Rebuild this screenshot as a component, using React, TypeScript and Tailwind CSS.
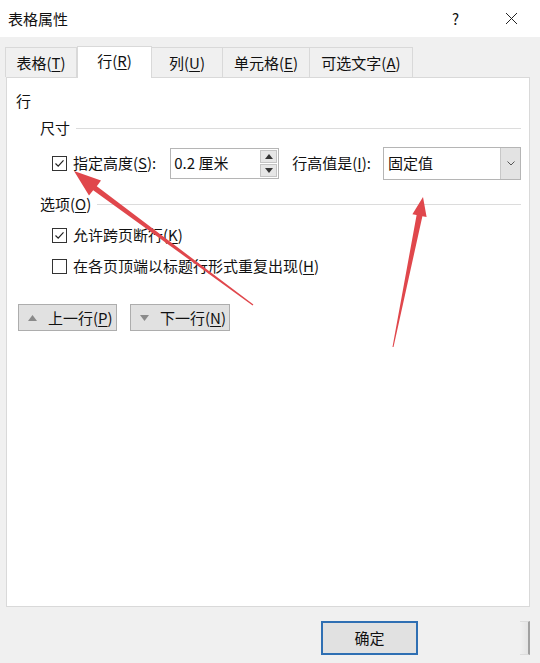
import React from "react";

const font = { fontFamily: '"Noto Sans CJK SC", "Noto Sans", sans-serif' };

function Check({ checked }: { checked: boolean }) {
  return (
    <div className="w-[15px] h-[15px] border border-[#333333] bg-white flex items-center justify-center shrink-0">
      {checked && (
        <svg width="11" height="11" viewBox="0 0 11 11">
          <path d="M1.5 5.5 L4.2 8.2 L9.5 2.3" fill="none" stroke="#222" strokeWidth="1.2" />
        </svg>
      )}
    </div>
  );
}

function U({ c }: { c: string }) {
  return <span className="underline underline-offset-2">{c}</span>;
}

function Tab({ label, k, active, w }: { label: string; k: string; active?: boolean; w: string }) {
  return (
    <div
      className={
        active
          ? `${w} h-[32px] bg-white border border-b-0 border-[#d9d9d9] relative z-10 -mb-px flex items-center justify-center text-[15px] leading-[20px] text-[#111] pb-[3px]`
          : `${w} h-[30px] bg-[#f0f0f0] border border-b-0 border-[#d9d9d9] -ml-px flex items-center justify-center text-[15px] leading-[20px] text-[#111]`
      }
    >
      <span>
        {label}(<U c={k} />)
      </span>
    </div>
  );
}

export default function App() {
  return (
    <div className="w-[540px] h-[663px] relative bg-[#f0f0f0] overflow-hidden" style={font}>
      {/* title bar */}
      <div className="h-[37px] bg-white flex items-center pl-[8px] text-[15px] text-[#111]">
        <span className="leading-[20px]">表格属性</span>
        <span className="ml-auto mr-[46px] text-[15px] leading-[20px]">?</span>
        <svg width="13" height="13" viewBox="0 0 13 13" className="mr-[22px]">
          <path d="M1 1 L12 12 M12 1 L1 12" stroke="#222" strokeWidth="1" />
        </svg>
      </div>

      {/* tabs */}
      <div className="mt-[9px] pl-[6px] flex items-end">
        <Tab label="表格" k="T" w="w-[72px]" />
        <Tab label="行" k="R" active w="w-[75px]" />
        <Tab label="列" k="U" w="w-[72px]" />
        <Tab label="单元格" k="E" w="w-[88px]" />
        <Tab label="可选文字" k="A" w="w-[104px]" />
      </div>

      {/* panel */}
      <div className="ml-[6px] w-[524px] h-[530px] bg-white border border-[#d9d9d9] pt-[13px] text-[15px] text-[#111]">
        <div className="pl-[9px] h-[20px] leading-[20px]">行</div>

        <div className="mt-[7px] ml-[33px] h-[20px] flex items-center">
          <span className="leading-[20px]">尺寸</span>
          <div className="flex-1 ml-[6px] mr-[8px] h-px bg-[#dcdcdc]" />
        </div>

        <div className="mt-[8px] h-[34px] flex items-center pl-[45px]">
          <Check checked />
          <span className="ml-[6px] leading-[20px]">
            指定高度(<U c="S" />):
          </span>
          <div className="ml-[14px] w-[109px] h-[31px] border border-[#b5b5b5] flex items-center justify-between pl-[3px] pr-[1px]">
            <span className="leading-[20px]" style={{ fontFamily: '"Noto Sans CJK SC", sans-serif' }}>
              0.2 厘米
            </span>
            <div className="flex flex-col gap-[1px]">
              <div className="w-[17px] h-[13px] bg-[#e6e6e6] border border-[#c4c4c4] flex items-center justify-center">
                <svg width="8" height="5" viewBox="0 0 8 5">
                  <path d="M0 5 L4 0 L8 5 Z" fill="#333" />
                </svg>
              </div>
              <div className="w-[17px] h-[13px] bg-[#e6e6e6] border border-[#c4c4c4] flex items-center justify-center">
                <svg width="8" height="5" viewBox="0 0 8 5">
                  <path d="M0 0 L4 5 L8 0 Z" fill="#333" />
                </svg>
              </div>
            </div>
          </div>
          <span className="ml-[13px] leading-[20px]">
            行高值是(<U c="I" />):
          </span>
          <div className="ml-[12px] w-[138px] h-[33px] border border-[#b5b5b5] flex items-stretch">
            <span className="flex-1 pl-[4px] flex items-center leading-[20px]">固定值</span>
            <div className="w-[20px] bg-[#e3e3e3] border-l border-[#c8c8c8] flex items-center justify-center">
              <svg width="8" height="5" viewBox="0 0 8 5">
                <path d="M0.5 0.5 L4 4 L7.5 0.5" fill="none" stroke="#555" strokeWidth="1" />
              </svg>
            </div>
          </div>
        </div>

        <div className="mt-[14px] ml-[33px] h-[20px] flex items-center">
          <span className="leading-[20px]">
            选项(<U c="O" />)
          </span>
          <div className="flex-1 ml-[6px] mr-[8px] h-px bg-[#dcdcdc]" />
        </div>

        <div className="mt-[11px] h-[20px] pl-[45px] flex items-center">
          <Check checked />
          <span className="ml-[6px] leading-[20px]">
            允许跨页断行(<U c="K" />)
          </span>
        </div>

        <div className="mt-[11px] h-[20px] pl-[45px] flex items-center">
          <Check checked={false} />
          <span className="ml-[6px] leading-[20px]">
            在各页顶端以标题行形式重复出现(<U c="H" />)
          </span>
        </div>

        <div className="mt-[28px] pl-[11px] flex gap-[13px]">
          <div className="w-[99px] h-[27px] bg-[#e1e1e1] border border-[#adadad] flex items-center pl-[9px]">
            <svg width="9" height="6" viewBox="0 0 9 6">
              <path d="M0 6 L4.5 0 L9 6 Z" fill="#8a8a8a" />
            </svg>
            <span className="ml-[11px] leading-[20px]">
              上一行(<U c="P" />)
            </span>
          </div>
          <div className="w-[100px] h-[27px] bg-[#e1e1e1] border border-[#adadad] flex items-center pl-[9px]">
            <svg width="9" height="6" viewBox="0 0 9 6">
              <path d="M0 0 L4.5 6 L9 0 Z" fill="#8a8a8a" />
            </svg>
            <span className="ml-[11px] leading-[20px]">
              下一行(<U c="N" />)
            </span>
          </div>
        </div>
      </div>

      {/* bottom buttons */}
      <div className="mt-[14px] flex items-center">
        <div className="ml-[321px] w-[97px] h-[34px] bg-[#e1e1e1] border-2 border-[#2f6fb3] flex items-center justify-center text-[15px] text-[#111]">
          <span className="leading-[20px]">确定</span>
        </div>
        <div className="ml-[102px] w-[10px] h-[34px] border-y border-r-2 border-y-[#dcdcdc] border-r-[#a0a0a0] bg-gradient-to-r from-[#f0f0f0] to-[#e4e4e4]" />
      </div>

      {/* annotation arrows */}
      <svg className="absolute inset-0 pointer-events-none" width="540" height="663" viewBox="0 0 540 663">
        <polygon
          points="74,171 101,180.5 96.8,186.3 253.4,304.6 252.6,305.4 93.2,190.3 89,195.5"
          fill="#e0474c"
        />
        <polygon
          points="423,197 426.6,217 422.4,216.2 393.5,347 392.5,347 416.6,215 412.4,214.2"
          fill="#e0474c"
        />
      </svg>
    </div>
  );
}
